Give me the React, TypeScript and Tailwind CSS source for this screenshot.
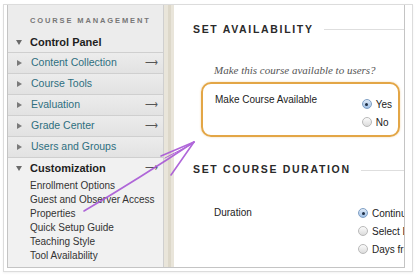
import React from "react";

const Row = ({ label, arrow = true }: { label: string; arrow?: boolean }) => (
  <div className="h-[21px] flex items-center border-b border-[#cfcfcf] bg-gradient-to-b from-[#ececec] to-[#e2e2e2] relative">
    <span className="w-0 h-0 ml-[9px] border-y-[3.5px] border-y-transparent border-l-[5px] border-l-[#7a7a7a]" />
    <span className="ml-[9px] text-[10.5px] text-[#2e6f80]">{label}</span>
    {arrow && <span className="absolute right-[5px] top-[3px] text-[9px] text-[#555]">⟶</span>}
  </div>
);

const Radio = ({ on, label }: { on?: boolean; label: string }) => (
  <div className="flex items-center h-[18px]">
    <span
      className={
        on
          ? "w-[10px] h-[10px] shrink-0 rounded-full border border-[#7f9fc4] bg-gradient-to-b from-[#dfeaf7] to-[#9fc0e6] flex items-center justify-center"
          : "w-[10px] h-[10px] shrink-0 rounded-full border border-[#b9b9b9] bg-gradient-to-b from-[#fbfbfb] to-[#dcdcdc]"
      }
    >
      {on && <span className="w-[3px] h-[3px] rounded-full bg-[#1d2d44]" />}
    </span>
    <span className="ml-[4px] text-[10px] text-[#222] whitespace-nowrap">{label}</span>
  </div>
);

export default function App() {
  return (
    <div
      className="w-[420px] h-[278px] bg-white relative overflow-hidden"
      style={{ fontFamily: '"Liberation Sans", Arial, sans-serif' }}
    >
      <div className="pt-[4px] pl-[3px]">
        <div className="w-[410px] h-[268px] border border-[#dcdcdc] pl-[3px] pr-[7px] pb-[3px] shadow-[0_1px_2px_rgba(0,0,0,0.06)]">
          <div className="w-full h-full border-x border-b border-[#c4c4c4] flex overflow-hidden">
            {/* Sidebar */}
            <div className="w-[155px] h-full bg-[#ececec] flex flex-col shrink-0">
              <div className="h-[28px] flex items-center pl-[22px] pt-[4px] text-[7.5px] tracking-[0.25em] text-[#777] font-bold whitespace-nowrap">
                COURSE MANAGEMENT
              </div>
              <div className="h-[20px] flex items-center border-b border-[#cfcfcf]">
                <span className="w-0 h-0 ml-[8px] border-x-[3.5px] border-x-transparent border-t-[5px] border-t-[#6a6a6a]" />
                <span className="ml-[8px] text-[11px] font-bold text-[#1e1e1e]">Control Panel</span>
              </div>
              <Row label="Content Collection" />
              <Row label="Course Tools" arrow={false} />
              <Row label="Evaluation" />
              <Row label="Grade Center" />
              <Row label="Users and Groups" arrow={false} />
              <div className="flex-1 bg-[#f1f1f1] relative">
                <div className="h-[20px] flex items-center">
                  <span className="w-0 h-0 ml-[8px] border-x-[3.5px] border-x-transparent border-t-[5px] border-t-[#6a6a6a]" />
                  <span className="ml-[8px] text-[11px] font-bold text-[#1e1e1e]">Customization</span>
                  <span className="absolute right-[5px] top-[3px] text-[9px] text-[#555]">⟶</span>
                </div>
                <div className="pl-[22px] flex flex-col text-[10px] text-[#333] leading-[14px] pt-[1px]">
                  <span>Enrollment Options</span>
                  <span>Guest and Observer Access</span>
                  <span>Properties</span>
                  <span>Quick Setup Guide</span>
                  <span>Teaching Style</span>
                  <span>Tool Availability</span>
                </div>
              </div>
            </div>
            {/* Divider */}
            <div className="w-[11px] h-full bg-[#e9e5da] border-l border-[#cfcfcf] flex justify-center shrink-0">
              <div className="w-[3px] h-full bg-[#ddd8ca]" />
            </div>
            {/* Content */}
            <div className="flex-1 min-w-0 h-full bg-white overflow-hidden relative">
              <div className="flex items-center mt-[17px] pl-[19px]">
                <span className="text-[10.5px] font-bold tracking-[0.16em] text-[#2a2a2a] whitespace-nowrap">SET AVAILABILITY</span>
                <div className="flex-1 h-px bg-[#dedede] ml-[10px]" />
              </div>
              <div
                className="ml-[40px] mt-[24px] text-[11px] italic text-[#555] whitespace-nowrap"
                style={{ fontFamily: '"Liberation Serif", Georgia, serif' }}
              >
                Make this course available to users?
              </div>
              <div className="ml-[27px] mt-[4px] w-[199px] h-[55px] border-2 border-[#e3a646] rounded-[10px] flex pl-[12px] pt-[8px] shadow-[0_0_2px_rgba(227,166,70,0.5)]">
                <span className="text-[10px] text-[#222] whitespace-nowrap">Make Course Available</span>
                <div className="ml-auto mr-[6px] mt-[3px] flex flex-col">
                  <Radio on label="Yes" />
                  <Radio label="No" />
                </div>
              </div>
              <div className="flex items-center mt-[25px] pl-[19px]">
                <span className="text-[10.5px] font-bold tracking-[0.16em] text-[#2a2a2a] whitespace-nowrap">SET COURSE DURATION</span>
                <div className="flex-1 h-px bg-[#dedede] ml-[10px]" />
              </div>
              <div className="flex mt-[27px] pl-[40px]">
                <span className="text-[10px] text-[#222] w-[144px] shrink-0">Duration</span>
                <div className="flex flex-col mt-[-1px] min-w-0 overflow-hidden">
                  <Radio on label="Continuous" />
                  <Radio label="Select Dates" />
                  <Radio label="Days from the Date of Enrollment" />
                </div>
              </div>
            </div>
          </div>
        </div>
      </div>
      {/* purple annotation arrow */}
      <svg className="absolute left-0 top-0" width="420" height="278" viewBox="0 0 420 278">
        <g fill="none" stroke="#a857d6" strokeWidth="1.6" strokeLinecap="round" opacity="0.9">
          <path d="M84 211 Q140 178 194 142" />
          <path d="M194 142 L161 156" />
          <path d="M194 142 L171 175" />
          <path d="M192 144 L165 158" strokeWidth="1" />
        </g>
      </svg>
    </div>
  );
}
